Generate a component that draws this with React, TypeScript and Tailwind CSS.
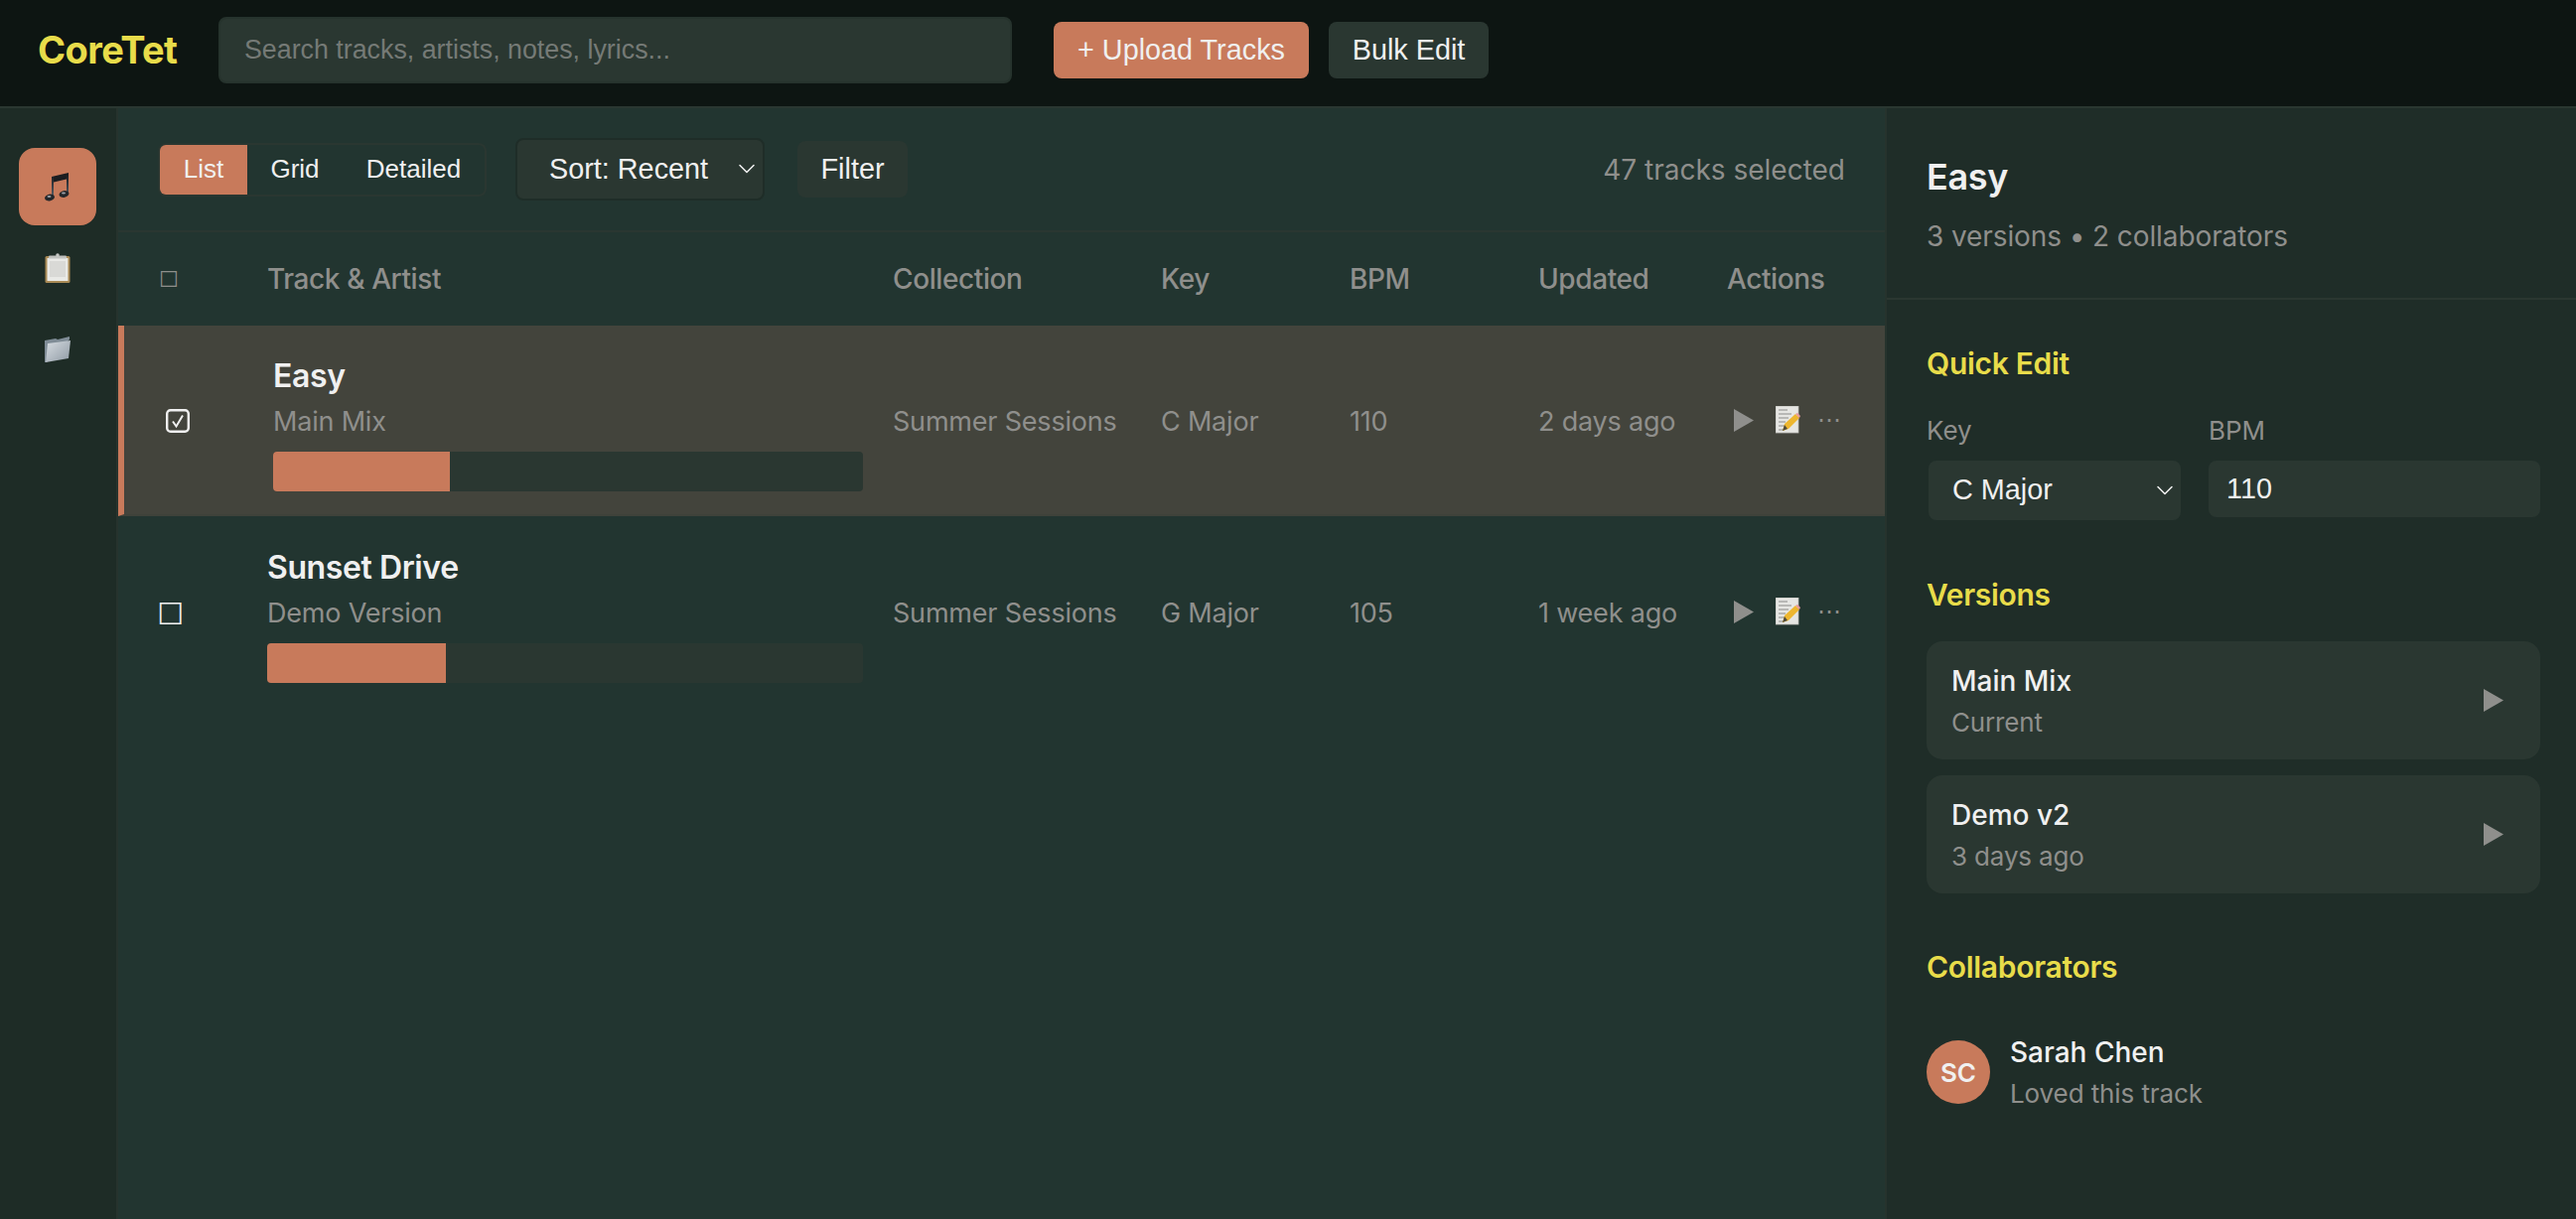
import { ChevronDown } from 'lucide-react'

const NotesIcon = () => (
  <svg width="26" height="30" viewBox="0 0 26 30">
    <defs>
      <linearGradient id="noteFill" x1="0" y1="0" x2="0" y2="1">
        <stop offset="0" stopColor="#17191c" />
        <stop offset="1" stopColor="#5b6068" />
      </linearGradient>
    </defs>
    <path d="M7 5 L24 1 V7 L7 11 Z" fill="#1c1d20" />
    <path d="M7 5 h2 V26 h-2 Z M22 2 h2 V22 h-2 Z" fill="url(#noteFill)" />
    <ellipse cx="5" cy="26" rx="5" ry="3.4" fill="#24262a" transform="rotate(-12 5 26)" />
    <ellipse cx="19.5" cy="22.5" rx="5" ry="3.4" fill="#24262a" transform="rotate(-12 19.5 22.5)" />
    <ellipse cx="4.5" cy="25" rx="2" ry="1" fill="#9aa0a8" />
    <ellipse cx="19" cy="21.5" rx="2" ry="1" fill="#9aa0a8" />
  </svg>
)

const ClipboardIcon = () => (
  <svg width="26" height="30" viewBox="0 0 26 30">
    <rect x="0.5" y="3" width="25" height="27" rx="1.5" fill="#a98a55" />
    <rect x="2.5" y="5" width="21" height="23" fill="#e9e9e6" />
    <rect x="5" y="8" width="16" height="16" fill="#d9d9d6" />
    <rect x="4" y="2.5" width="18" height="3" rx="1" fill="#bfc0bd" />
    <circle cx="13" cy="2" r="1.8" fill="#c5c6c3" />
  </svg>
)

const FolderIcon = () => (
  <svg width="28" height="28" viewBox="0 0 28 28">
    <defs>
      <linearGradient id="folderFill" x1="0" y1="0" x2="1" y2="1">
        <stop offset="0" stopColor="#d7dde2" />
        <stop offset="1" stopColor="#8f9aa4" />
      </linearGradient>
    </defs>
    <path d="M1 5 L12 3 L14 4 L26 1 V4 L3 27 L1 27 Z" fill="#7f8c96" />
    <path d="M4 8 L27 5 L25 23 L2 27 Z" fill="url(#folderFill)" />
  </svg>
)

const MemoIcon = () => (
  <svg width="25" height="28" viewBox="0 0 25 28" className="shrink-0">
    <rect x="0" y="0" width="23" height="27" fill="#e6e6e3" stroke="#b9b9b5" strokeWidth="0.8" />
    <path d="M3 4h9M3 8h13M3 12h10M3 16h7M3 20h6M3 24h5" stroke="#8a8a88" strokeWidth="1" />
    <path d="M7 25 L9 18 L20 8 L24 12 L13 23 Z" fill="#edb62f" />
    <path d="M7 25 L9 19 L12 23 Z" fill="#4e4a3c" />
    <path d="M20 8 L22 7 L25 10 L24 12 Z" fill="#e89a9a" />
  </svg>
)

const PlayIcon = () => (
  <svg width="20" height="23" viewBox="0 0 20 23" className="shrink-0">
    <path d="M0 0 L20 11.5 L0 23 Z" fill="#8f8f8c" />
  </svg>
)

const CheckedBox = () => (
  <svg width="24" height="24" viewBox="0 0 24 24" className="ml-[2px] -mt-[3px]">
    <rect x="1.2" y="1.2" width="21.6" height="21.6" rx="3.5" fill="none" stroke="#f0f0f0" strokeWidth="2.4" />
    <path d="M7 12.5 L10.5 17.5 L17 6.5" fill="none" stroke="#f0f0f0" strokeWidth="2" />
  </svg>
)

const navItems = [
  { icon: <NotesIcon />, active: true },
  { icon: <ClipboardIcon />, active: false },
  { icon: <FolderIcon />, active: false },
]

const tracks = [
  { name: 'Easy', version: 'Main Mix', collection: 'Summer Sessions', keyName: 'C Major', bpm: '110', updated: '2 days ago', selected: true },
  { name: 'Sunset Drive', version: 'Demo Version', collection: 'Summer Sessions', keyName: 'G Major', bpm: '105', updated: '1 week ago', selected: false },
]

const versions = [
  { name: 'Main Mix', meta: 'Current' },
  { name: 'Demo v2', meta: '3 days ago' },
]

const gridCols = 'grid grid-cols-[80px_1fr_240px_160px_160px_160px_120px] gap-x-[30px] items-center'
const cellText = 'text-[27px] tracking-[-0.2px] text-[#8f8f8c]'
const controlFont = "font-['Liberation_Sans',sans-serif]"

const TrackRow = ({ track }: { track: (typeof tracks)[number] }) => (
  <div
    className={`${gridCols} h-[192px] pt-[5px] pl-[40px] pr-[39px] ${
      track.selected ? 'bg-[#43443c] border-l-[6px] border-l-[#c87a5b] border-b-2 border-b-[#3f423a]' : ''
    }`}
  >
    {track.selected ? (
      <CheckedBox />
    ) : (
      <span className="font-['DejaVu_Sans'] text-[30px] leading-none -ml-[1px] text-[#f0f0f0]">☐</span>
    )}
    <div className="flex flex-col">
      <span className="text-[32px] leading-[44px] font-semibold tracking-[-0.4px] text-[#f0f0f0]">{track.name}</span>
      <span className={`${cellText} leading-[40px] mt-[4px]`}>{track.version}</span>
      <div className="h-[40px] mt-[10px] rounded-[4px] bg-[#2a3731] overflow-hidden">
        <div className="h-full w-[30%] bg-[#c87a5b]" />
      </div>
    </div>
    <span className={cellText}>{track.collection}</span>
    <span className={cellText}>{track.keyName}</span>
    <span className={cellText}>{track.bpm}</span>
    <span className={cellText}>{track.updated}</span>
    <div className="flex items-center pl-[7px] -mt-[5px] gap-[22px] text-[#8f8f8c]">
      <PlayIcon />
      <MemoIcon />
      <span className="-ml-[5px] font-['DejaVu_Sans'] text-[24px] leading-none">⋯</span>
    </div>
  </div>
)

export default function App() {
  return (
    <div className="h-[1228px] w-full overflow-hidden flex flex-col bg-[#223530] font-['Inter',sans-serif] text-[#f0f0f0]">
      <header className="h-[109px] shrink-0 flex items-center gap-[42px] pl-[38px] pb-[6px] bg-[#0d1512] border-b-2 border-[#2a3731]">
        <div className="w-[140px] text-[38px] font-bold tracking-[-0.6px] text-[#e8dc4a]">CoreTet</div>
        <input
          className={`${controlFont} w-[799px] h-[67px] px-[24px] rounded-[8px] bg-[#2a3731] border-2 border-[#26332d] text-[26.8px] outline-none placeholder:text-[#757a76]`}
          placeholder="Search tracks, artists, notes, lyrics..."
        />
        <div className={`${controlFont} flex items-center gap-[20px]`}>
          <button className="h-[57px] w-[257px] rounded-[8px] bg-[#c87a5b] text-[28.8px]">+ Upload Tracks</button>
          <button className="h-[57px] w-[161px] rounded-[8px] bg-[#2a3731] text-[28.8px]">Bulk Edit</button>
        </div>
      </header>

      <div className="flex-1 flex min-h-0">
        <nav className="w-[119px] shrink-0 flex flex-col gap-[4px] pt-[40px] pl-[19px] bg-[#1e2c26] border-r-2 border-[#26332d]">
          {navItems.map((item, i) => (
            <div
              key={i}
              className={`w-[78px] h-[78px] flex items-center justify-center rounded-[16px] ${item.active ? 'bg-[#c87a5b]' : ''}`}
            >
              {item.icon}
            </div>
          ))}
        </nav>

        <main className="flex-1 min-w-0 flex flex-col border-r-2 border-[#26332d]">
          <div className={`${controlFont} h-[125px] shrink-0 flex items-center pl-[40px] pr-[40px] border-b-2 border-[#2a3731]`}>
            <div className="flex w-[331px] h-[54px] rounded-[8px] border-2 border-[#2a3731] overflow-hidden text-[26px]">
              <span className="w-[88px] flex items-center justify-center bg-[#c87a5b]">List</span>
              <span className="w-[96px] flex items-center justify-center">Grid</span>
              <span className="flex-1 flex items-center justify-center">Detailed</span>
            </div>
            <div className="relative ml-[29px] w-[251px]">
              <select className="w-full h-[63px] pl-[32px] appearance-none rounded-[8px] bg-[#2a3731] border-2 border-[#1f2d28] text-[28.8px] outline-none">
                <option>Sort: Recent</option>
              </select>
              <ChevronDown className="absolute right-[4px] top-[17px] w-[28px] h-[28px] text-[#f0f0f0]" strokeWidth={1.3} />
            </div>
            <button className="ml-[33px] w-[111px] h-[57px] rounded-[8px] bg-[#2a3731] text-[28.8px]">Filter</button>
            <span className="ml-auto font-['Inter',sans-serif] text-[28px] text-[#8f8f8c]">47 tracks selected</span>
          </div>

          <div className={`${gridCols} h-[94px] shrink-0 pl-[40px] pr-[39px] text-[28px] tracking-[-0.4px] font-medium text-[#8f8f8c]`}>
            <span className="font-['DejaVu_Sans'] text-[#8f8f8c] text-[22px] font-normal pl-[1px]">☐</span>
            <span>Track &amp; Artist</span>
            <span>Collection</span>
            <span>Key</span>
            <span>BPM</span>
            <span>Updated</span>
            <span>Actions</span>
          </div>

          {tracks.map(track => (
            <TrackRow key={track.name} track={track} />
          ))}
        </main>

        <aside className="w-[694px] shrink-0 bg-[#1f2d28]">
          <div className="h-[193px] pl-[40px] pr-[36px] pt-[46px] border-b-2 border-[#2a3731]">
            <h2 className="text-[36px] leading-[46px] font-semibold tracking-[-0.3px]">Easy</h2>
            <p className="mt-[15px] text-[28px] leading-[44px] tracking-[-0.1px] text-[#8f8f8c]">3 versions • 2 collaborators</p>
          </div>

          <div className="pl-[40px] pr-[36px] pt-[44px]">
            <h3 className="text-[30px] leading-[40px] font-semibold tracking-[-0.3px] text-[#e8dc4a]">Quick Edit</h3>
            <div className="flex gap-[28px] mt-[30px]">
              <div className="w-[256px]">
                <div className="text-[26px] leading-[36px] text-[#8f8f8c]">Key</div>
                <div className="relative mt-[12px] ml-[2px]">
                  <select className={`${controlFont} w-full h-[60px] pl-[24px] appearance-none rounded-[8px] bg-[#2a3731] text-[28.8px] outline-none`}>
                    <option>C Major</option>
                  </select>
                  <ChevronDown className="absolute right-[2px] top-[16px] w-[28px] h-[28px]" strokeWidth={1.3} />
                </div>
              </div>
              <div className="flex-1">
                <div className="text-[26px] leading-[36px] text-[#8f8f8c]">BPM</div>
                <input
                  className={`${controlFont} w-full h-[57px] mt-[12px] px-[18px] rounded-[8px] bg-[#2a3731] text-[28.8px] outline-none`}
                  defaultValue="110"
                />
              </div>
            </div>

            <h3 className="mt-[55px] text-[30px] leading-[40px] font-semibold tracking-[-0.3px] text-[#e8dc4a]">Versions</h3>
            <div className="flex flex-col gap-[16px] mt-[27px]">
              {versions.map(v => (
                <div key={v.name} className="h-[119px] flex items-center justify-between pl-[25px] pr-[37px] rounded-[16px] bg-[#2a3731]">
                  <div>
                    <div className="text-[28px] leading-[40px] font-medium">{v.name}</div>
                    <div className="mt-[4px] text-[26px] leading-[36px] tracking-[-0.15px] text-[#8f8f8c]">{v.meta}</div>
                  </div>
                  <PlayIcon />
                </div>
              ))}
            </div>

            <h3 className="mt-[54px] text-[30px] leading-[40px] font-semibold tracking-[-0.3px] text-[#e8dc4a]">Collaborators</h3>
            <div className="flex items-center gap-[20px] mt-[46px]">
              <div className="w-[64px] h-[64px] rounded-full flex items-center justify-center bg-[#c87a5b] text-[26px] font-semibold">SC</div>
              <div>
                <div className="text-[28px] leading-[40px] font-medium">Sarah Chen</div>
                <div className="mt-[4px] text-[26px] leading-[36px] tracking-[-0.1px] text-[#8f8f8c]">Loved this track</div>
              </div>
            </div>
          </div>
        </aside>
      </div>
    </div>
  )
}
